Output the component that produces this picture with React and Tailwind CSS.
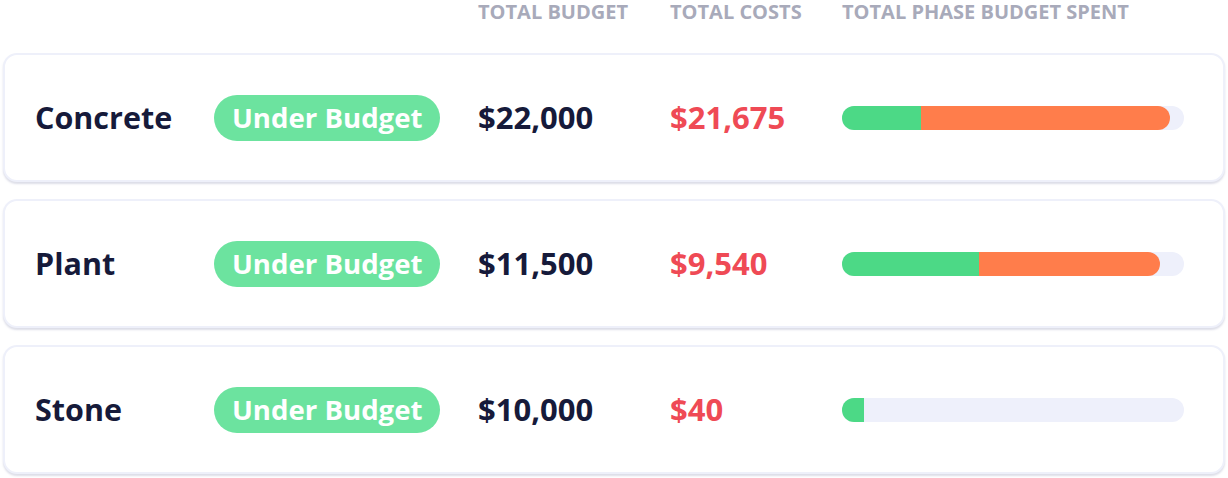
const rows = [
  { name: "Concrete", budget: "$22,000", costs: "$21,675", green: 79, orange: 249 },
  { name: "Plant", budget: "$11,500", costs: "$9,540", green: 137, orange: 181 },
  { name: "Stone", budget: "$10,000", costs: "$40", green: 22, orange: 0 },
];

const App = () => {
  return (
    <div
      className="w-[1228px] h-[478px] bg-white px-[3px]"
      style={{ fontFamily: "'Open Sans', sans-serif" }}
    >
      {/* Header */}
      <div className="flex h-[24px] items-center pl-[32px] text-[20px] leading-none font-bold uppercase text-[#a8aaba]">
        <div className="w-[179px]" />
        <div className="w-[264px]" />
        <div className="w-[192px]">Total Budget</div>
        <div className="w-[172px]">Total Costs</div>
        <div>Total Phase Budget Spent</div>
      </div>

      {/* Rows */}
      <div className="mt-[29px] flex flex-col gap-[17px]">
        {rows.map((r) => (
          <div
            key={r.name}
            className="flex h-[129px] items-center rounded-[14px] border-2 border-[#eef0fa] bg-white pl-[30px] shadow-[0_2px_2px_rgba(180,182,205,0.45)]"
          >
            <div className="w-[179px] text-[30.5px] font-bold text-[#161a3a]">
              {r.name}
            </div>
            <div className="w-[264px]">
              <span className="inline-flex h-[46px] items-center rounded-full bg-[#6ce39f] px-[18px] text-[27.6px] font-bold text-white">
                Under Budget
              </span>
            </div>
            <div className="w-[192px] text-[31px] font-bold text-[#161a3a]">
              {r.budget}
            </div>
            <div className="w-[172px] text-[31px] font-bold text-[#ef4a55]">
              {r.costs}
            </div>
            <div className="flex h-[24px] w-[342px] rounded-full bg-[#eef0fb]">
              <div
                className="h-full rounded-l-full bg-[#4cd986]"
                style={{ width: r.green }}
              />
              {r.orange > 0 && (
                <div
                  className="h-full rounded-r-full bg-[#ff7d4b]"
                  style={{ width: r.orange }}
                />
              )}
            </div>
          </div>
        ))}
      </div>
    </div>
  );
};

export default App;
